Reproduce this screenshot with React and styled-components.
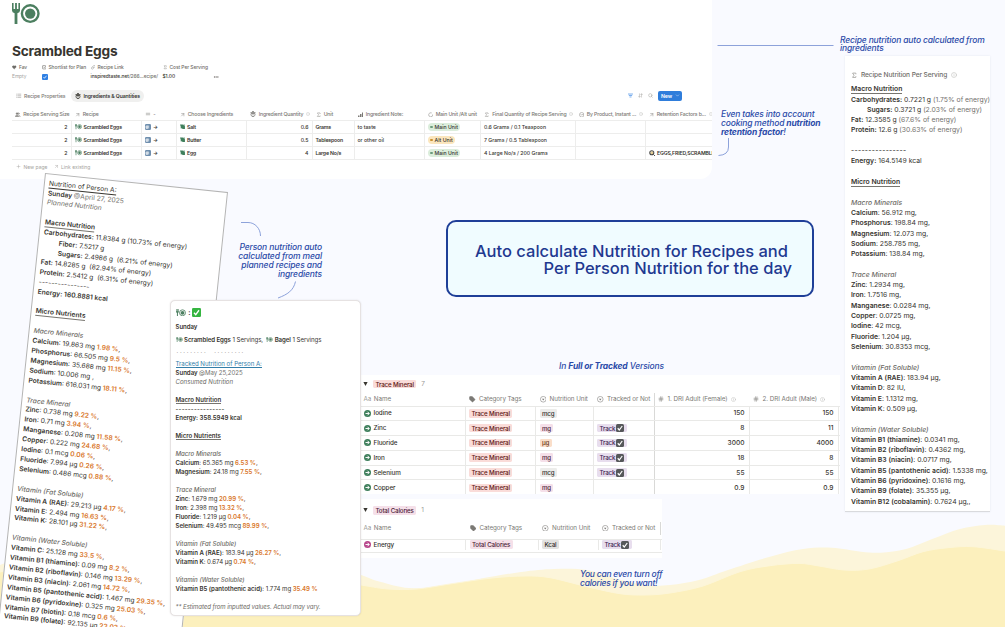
import React from 'react';
import styled, { createGlobalStyle, css } from 'styled-components';
import {
  ArrowUpRight,
  ArrowDownUp,
  CheckSquare,
  ChevronDown,
  CircleChevronDown,
  Ellipsis,
  Heart,
  Info,
  Link,
  List,
  ListFilter,
  LoaderCircle,
  Plus,
  Search,
  Sigma,
  Tag as TagIcon,
  Users,
  Equal,
  Hash,
} from 'lucide-react';

const GlobalStyle = createGlobalStyle`
  * { box-sizing: border-box; }
  body {
    margin: 0;
    background: #f9faff;
    font-family: Inter, "Liberation Sans", sans-serif;
    color: #37352f;
  }
  svg { flex-shrink: 0; }
`;

const Board = styled.main`
  position: relative;
  width: 1005px;
  height: 627px;
  overflow: hidden;
  background: #f9faff;
`;

const Backdrop = styled.svg`
  position: absolute;
  inset: 0;
`;

/* every sheet pinned on the board */
const Sheet = styled.section`
  position: absolute;
  left: ${({ $x }) => $x}px;
  top: ${({ $y }) => $y}px;
  width: ${({ $w }) => $w}px;
  height: ${({ $h }) => $h}px;
  background: #fff;
  overflow: hidden;
`;

const RecipeSheet = styled(Sheet)`
  border-radius: 0 0 12px 0;
  padding: 3px 0 0 12px;
`;

const NutritionSheet = styled(Sheet)`
  padding: 13px 0 0 6px;
  border-bottom: 1.5px solid #d9dadd;
  box-shadow: 0 0 2px rgb(60 70 110 / 10%);
`;

const PlannedSheet = styled(Sheet)`
  transform: rotate(5.95deg);
  transform-origin: 0 0;
  border: 1px solid #b4b4b4;
  padding: 4.6px 0 0 4px;
`;

const TrackedSheet = styled(Sheet)`
  border: 1px solid #e6e2e2;
  border-radius: 5px;
  box-shadow: 0 0 1.5px rgb(80 60 60 / 18%);
  padding: 6px 0 0 5px;
`;

/* ---------- text ---------- */

const Lines = styled.div`
  font-size: ${({ $size }) => $size}px;
  line-height: ${({ $leading }) => $leading}px;
  letter-spacing: ${({ $track }) => $track || 0}px;
  white-space: pre;
`;

const Line = styled.div`
  height: ${({ $height }) => $height}px;
  padding-left: ${({ $indent }) => $indent || 0}px;
`;

const Strong = styled.b`
  font-weight: 600;
`;

const Heading = styled.span`
  font-weight: 600;
  border-bottom: 0.7px solid #77756f;
`;

const Group = styled.i`
  color: #6d6b66;
  font-weight: ${({ $light }) => ($light ? 400 : 500)};
  letter-spacing: ${({ $track }) => $track || 0}px;
`;

const Percent = styled.span`
  color: #d9772b;
  font-weight: 600;
`;

const Muted = styled.span`
  color: #73716d;
`;

const PersonLink = styled.span`
  color: ${({ $blue }) => ($blue ? '#337ea9' : '#37352f')};
  border-bottom: 0.7px solid currentColor;
`;

const Dashes = styled.span`
  font-weight: 500;
  letter-spacing: ${({ $track }) => $track}px;
`;

const Note = styled.p`
  position: absolute;
  left: ${({ $x }) => $x}px;
  top: ${({ $y }) => $y}px;
  width: ${({ $w }) => $w}px;
  margin: 0;
  color: #2b4aa8;
  font-size: 8.5px;
  line-height: 8.9px;
  font-style: italic;
  font-weight: 500;
  letter-spacing: ${({ $track }) => $track || -0.13}px;
  text-align: ${({ $align }) => $align || 'left'};
  white-space: pre;

  b { font-weight: 700; }
`;

const Callout = styled.section`
  position: absolute;
  left: 445.5px;
  top: 219.5px;
  width: 368px;
  height: 77.5px;
  border: 2px solid #1f3f98;
  border-radius: 10px;
  background: #f0fcff;
  display: flex;
  flex-direction: column;
  justify-content: center;
  align-items: flex-end;
  padding: 4px 19.5px 0 0;
  color: #1f3990;
  font-size: 16.5px;
  line-height: 17.5px;
  font-weight: 500;
  white-space: pre;
`;

const CalloutLine = styled.span`
  margin-right: ${({ $inset }) => $inset || 0}px;
`;

/* ---------- recipe page ---------- */

const Title = styled.h1`
  margin: 12px 0 0;
  font-size: 13.7px;
  line-height: 23px;
  font-weight: 700;
  letter-spacing: -0.22px;
  height: 22px;
`;

const Props = styled.div`
  display: grid;
  grid-template-columns: 29.5px 49px 72px 50.5px 30px;
  font-size: 4.9px;
  line-height: 9.3px;
  letter-spacing: -0.06px;
  margin-top: 1px;
  white-space: nowrap;
`;

const PropName = styled.div`
  display: flex;
  align-items: center;
  gap: 2.5px;
  color: #6f6d69;
  font-weight: 500;
`;

const PropValue = styled.div`
  display: flex;
  align-items: center;
  color: ${({ $faint }) => ($faint ? '#a5a4a1' : '#37352f')};
  font-weight: ${({ $faint }) => ($faint ? 400 : 500)};
`;

const BlueCheck = styled.span`
  width: 6px;
  height: 6px;
  border-radius: 1px;
  background: #2f80e4;
  display: grid;
  place-items: center;
`;

const Toolbar = styled.div`
  display: flex;
  align-items: center;
  height: 12px;
  margin: 8.4px 0 6.6px;
  padding-right: 30px;
  font-size: 5.1px;
  letter-spacing: -0.1px;
`;

const ViewTab = styled.span`
  display: flex;
  align-items: center;
  gap: 2.5px;
  height: 11.5px;
  padding: 0 4px;
  margin-right: ${({ $gap }) => $gap || 0}px;
  border-radius: 6px;
  white-space: nowrap;
  color: ${({ $active }) => ($active ? '#37352f' : '#7c7a76')};
  background: ${({ $active }) => ($active ? '#f0f0ef' : 'transparent')};
  font-weight: ${({ $active }) => ($active ? 600 : 500)};
`;

const Tools = styled.div`
  margin-left: auto;
  display: flex;
  align-items: center;
  gap: 5px;
  color: #93918d;
`;

const NewButton = styled.span`
  display: flex;
  align-items: center;
  justify-content: space-between;
  width: 24px;
  height: 10px;
  padding: 0 2px 0 3px;
  border-radius: 2px;
  background: #2f7ddb;
  color: #fff;
  font-size: 5.2px;
  font-weight: 600;
`;

const recipeColumns = '59.5px 70px 35px 70.5px 65.5px 42px 70px 56.5px 94.5px 70px 80px';

const RecipeRow = styled.div`
  display: grid;
  grid-template-columns: ${recipeColumns};
  height: ${({ $head }) => ($head ? 12.5 : 13)}px;
  border-bottom: 1px solid #ededec;
  font-size: 5.2px;
  white-space: nowrap;
`;

const RecipeCell = styled.div`
  display: flex;
  align-items: center;
  gap: ${({ $head }) => ($head ? 2.7 : 2)}px;
  justify-content: ${({ $end }) => ($end ? 'flex-end' : 'flex-start')};
  padding: 0 3px;
  border-right: ${({ $head }) => ($head ? 0 : '1px solid #ededec')};
  color: ${({ $head }) => ($head ? '#7b7975' : '#37352f')};
  font-weight: ${({ $strong }) => ($strong ? 600 : 500)};
  letter-spacing: ${({ $head, $strong }) => ($head ? -0.16 : $strong ? -0.17 : -0.02)}px;

  &:last-child { border-right: 0; }
`;

const pillColors = {
  green: ['#dbeddb', '#6c9b7d'],
  yellow: ['#fbe6bd', '#cb912f'],
};

const Pill = styled.span`
  display: flex;
  align-items: center;
  gap: 2px;
  height: 7.4px;
  padding: 0 2.5px;
  border-radius: 4px;
  background: ${({ $color }) => pillColors[$color][0]};

  &::before {
    content: '';
    width: 2.6px;
    height: 2.6px;
    border-radius: 50%;
    background: ${({ $color }) => pillColors[$color][1]};
  }
`;

const NewRow = styled.div`
  display: flex;
  align-items: center;
  gap: 2.5px;
  height: 13px;
  padding-left: 4px;
  color: #a5a3a0;
  font-size: 5px;
  white-space: nowrap;

  svg:not(:first-child) { margin-left: 3.5px; }
`;

const KeyCap = styled.span`
  width: 6.4px;
  height: 6.4px;
  border-radius: 1.2px;
  background: #6f8fae;
  color: #fff;
  display: grid;
  place-items: center;
`;

/* ---------- nutrient tables ---------- */

const DbRow = styled.div`
  display: grid;
  grid-template-columns: ${({ $cols }) => $cols};
  height: ${({ $h }) => $h}px;
  padding-bottom: ${({ $drop }) => $drop || 0}px;
  border-bottom: ${({ $last }) => ($last ? 0 : '1px solid #e9e9e7')};
  font-size: 6.5px;
  white-space: nowrap;
`;

const DbCell = styled.div`
  display: flex;
  align-items: center;
  gap: ${({ $head }) => ($head ? 3.6 : 3)}px;
  padding: 0 4px 0 3.5px;
  justify-content: ${({ $end }) => ($end ? 'flex-end' : 'flex-start')};
  color: ${({ $head }) => ($head ? '#7b7975' : '#37352f')};
  font-size: ${({ $end }) => ($end ? 6.6 : 6.3)}px;
  font-weight: ${({ $name, $end }) => ($name || $end ? 500 : 400)};
  letter-spacing: ${({ $end }) => ($end ? 0 : -0.08)}px;
  ${({ $head }) =>
    !$head &&
    css`
      border-right: 1px solid #e9e9e7;
    `}
  ${({ $rule }) =>
    $rule &&
    css`
      border-right: 1px solid #d9d9d7;
    `}
`;

const GroupHead = styled.div`
  display: flex;
  align-items: center;
  height: ${({ $h }) => $h}px;
  padding-left: 3px;
  gap: 5px;
  font-size: 6.5px;
  color: #9b9a97;
`;

const tagColors = {
  red: ['#fadcd9', '#5d1715'],
  pink: ['#f5e0e9', '#4c2337'],
  gray: ['#ececea', '#32302c'],
  orange: ['#fadec9', '#6a3a1b'],
  purple: ['#e8deee', '#412454'],
  stone: ['#e3e2e0', '#32302c'],
};

const Tag = styled.span`
  display: inline-flex;
  align-items: center;
  gap: 1.2px;
  height: 8.6px;
  padding: 0 2.4px;
  border-radius: 1.4px;
  font-size: 6.2px;
  font-weight: 500;
  letter-spacing: -0.15px;
  background: ${({ $color }) => tagColors[$color][0]};
  color: ${({ $color }) => tagColors[$color][1]};
`;

/* ---------- drawings ---------- */

const Plate = ({ width = 28, height = 21 }) => (
  <svg width={width} height={height} viewBox="0 0 28 21" fill="#4c7f60">
    <path d="M0 0h1.6v6h1.5V0h1.8v6h1.5V0H8v7.4q0 2.3-2.6 2.8V21H2.6V10.2Q0 9.7 0 7.4z" />
    <circle cx="18.2" cy="10.6" r="8.3" fill="none" stroke="#4c7f60" strokeWidth="2.4" />
    <circle cx="18.2" cy="10.6" r="5.2" />
  </svg>
);

const Leaf = () => (
  <svg width="5.5" height="5.5" viewBox="0 0 10 10">
    <path d="M0 1h5l4 3v5H5L2 7z" fill="#3f7f5c" />
    <path d="M1 7h3M6 2h4" stroke="#3f7f5c" strokeWidth="1.5" />
  </svg>
);

const Bowl = () => (
  <svg width="6" height="6" viewBox="0 0 12 12" fill="none" stroke="currentColor" strokeWidth="1.5">
    <path d="M1 3h10M2 5h8v3l-2 3H4L2 8zM4 1h4M6 3v6" />
  </svg>
);

const Bars = () => (
  <svg width="5.5" height="5.5" viewBox="0 0 11 11" fill="currentColor">
    <path d="M0 7h3v3H0zM4 4h3v6H4zM8 1h3v9H8z" />
  </svg>
);

const Go = ({ color }) => (
  <svg width="7" height="7" viewBox="0 0 14 14">
    <circle cx="7" cy="7" r="7" fill={color} />
    <path d="M3 7h7M7 3.5 10.5 7 7 10.5" fill="none" stroke="#fff" strokeWidth="1.9" />
  </svg>
);

const Select = () => (
  <svg width="6.5" height="6.5" viewBox="0 0 13 13" fill="none" stroke="currentColor">
    <circle cx="6.5" cy="6.5" r="5.7" strokeWidth="1.1" />
    <path d="M4 5.3h5L6.5 8.8z" fill="currentColor" stroke="none" />
  </svg>
);

const DarkCheck = () => (
  <svg width="8" height="8" viewBox="0 0 16 16">
    <rect width="16" height="16" rx="3" fill="#56585a" />
    <path d="m3.5 8.5 3 3.5 6-8" fill="none" stroke="#fff" strokeWidth="2.4" />
  </svg>
);

const GreenCheck = () => (
  <svg width="9" height="9" viewBox="0 0 18 18">
    <rect width="18" height="18" rx="2.5" fill="#35b541" />
    <path d="m4 9.5 3.5 4L14 4.5" fill="none" stroke="#fff" strokeWidth="2.6" />
  </svg>
);

const Pan = () => (
  <svg width="6.5" height="6.5" viewBox="0 0 14 14">
    <circle cx="6" cy="6" r="5.5" fill="#4a4a48" />
    <circle cx="6" cy="6" r="3.2" fill="#efe6c8" />
    <circle cx="6.5" cy="6.5" r="1.5" fill="#d8a53a" />
    <path d="m10 10 3 3" stroke="#4a4a48" strokeWidth="2" />
  </svg>
);

const Triangle = () => (
  <svg width="5" height="4" viewBox="0 0 5 4"><path d="M.4 0h4.2L2.5 4z" fill="#37352f" /></svg>
);

const TypeName = styled.span`
  color: #a09e9a;
  margin-right: -1px;
`;

// passes a soft curve through the given points
function smooth(points) {
  let d = `M${points[0]}`;
  for (let i = 0; i < points.length - 1; i += 1) {
    const a = points[i - 1] || points[i];
    const b = points[i];
    const c = points[i + 1];
    const e = points[i + 2] || c;
    d += `C${b[0] + (c[0] - a[0]) / 6} ${b[1] + (c[1] - a[1]) / 6} ${c[0] - (e[0] - b[0]) / 6} ${c[1] - (e[1] - b[1]) / 6} ${c[0]} ${c[1]}`;
  }
  return d;
}

const backWave = [
  [0, 565], [60, 545], [180, 530], [300, 552], [361, 575], [380, 581.7], [409, 588], [442, 586.7], [479, 579],
  [521, 572], [554, 569], [587, 570], [617, 579], [645, 585], [670, 585], [699, 580], [728, 570], [770, 556.7],
  [803, 549], [832, 547.7], [861, 551.7], [881, 552.7], [906, 549], [935, 538], [960, 529], [985, 525], [1005, 525.7],
];

const frontWave = [
  [0, 572], [60, 560], [180, 560], [300, 575], [361, 585], [388, 589], [417, 589], [450, 584], [492, 578],
  [525, 576], [550, 577.7], [587, 586.7], [620, 593.7], [645, 595], [670, 593], [703, 586], [740, 571.7],
  [770, 565.7], [799, 563.4], [819, 566], [844, 570], [869, 569], [898, 560.7], [923, 551.7], [948, 547.7],
  [973, 546.7], [1005, 551],
];

/* ---------- data ---------- */

const recipeNutrition = [
  { h: 'Macro Nutrition' },
  { b: 'Carbohydrates:', t: '0.7221 g', m: '(1.75% of energy)' },
  { b: 'Sugars:', t: '0.3721 g', m: '(2.03% of energy)', indent: 16 },
  { b: 'Fat:', t: '12.3585 g', m: '(67.6% of energy)' },
  { b: 'Protein:', t: '12.6 g', m: '(30.63% of energy)' },
  {},
  { dash: '----------------', track: 0.3 },
  { b: 'Energy:', t: '164.5149 kcal' },
  {},
  { h: 'Micro Nutrition' },
  {},
  { g: 'Macro Minerals' },
  { b: 'Calcium', t: '56.912 mg,' },
  { b: 'Phosphorus', t: '198.84 mg,' },
  { b: 'Magnesium', t: '12.073 mg,' },
  { b: 'Sodium', t: '258.785 mg,' },
  { b: 'Potassium', t: '138.84 mg,' },
  {},
  { g: 'Trace Mineral' },
  { b: 'Zinc', t: '1.2934 mg,' },
  { b: 'Iron', t: '1.7516 mg,' },
  { b: 'Manganese', t: '0.0284 mg,' },
  { b: 'Copper', t: '0.0725 mg,' },
  { b: 'Iodine', t: '42 mcg,' },
  { b: 'Fluoride', t: '1.204 µg,' },
  { b: 'Selenium', t: '30.8353 mcg,' },
  {},
  { g: 'Vitamin (Fat Soluble)' },
  { b: 'Vitamin A (RAE)', t: '183.94 µg,' },
  { b: 'Vitamin D', t: '82 IU,' },
  { b: 'Vitamin E', t: '1.1312 mg,' },
  { b: 'Vitamin K', t: '0.509 µg,' },
  {},
  { g: 'Vitamin (Water Soluble)' },
  { b: 'Vitamin B1 (thiamine)', t: '0.0341 mg,' },
  { b: 'Vitamin B2 (riboflavin)', t: '0.4362 mg,' },
  { b: 'Vitamin B3 (niacin)', t: '0.0717 mg,' },
  { b: 'Vitamin B5 (pantothenic acid)', t: '1.5338 mg,' },
  { b: 'Vitamin B6 (pyridoxine)', t: '0.1616 mg,' },
  { b: 'Vitamin B9 (folate)', t: '35.355 µg,' },
  { b: 'Vitamin B12 (cobalamin)', t: '0.7624 µg,,' },
];

const plannedNutrition = [
  { link: 'Nutrition of Person A:' },
  { b: 'Sunday ', m: '@April 27, 2025' },
  { g: 'Planned Nutrition', light: true },
  {},
  { h: 'Macro Nutrition' },
  { b: 'Carbohydrates:', t: '11.8384 g (10.73% of energy)' },
  { b: 'Fiber:', t: '7.5217 g', indent: 16 },
  { b: 'Sugars:', t: '2.4986 g  (6.21% of energy)', indent: 16 },
  { b: 'Fat:', t: '14.8285 g  (82.94% of energy)' },
  { b: 'Protein:', t: '2.5412 g  (6.31% of energy)' },
  { dash: '----------------', track: 0.1 },
  { b: 'Energy: 160.8881 kcal ' },
  {},
  { h: 'Micro Nutrients' },
  {},
  { g: 'Macro Minerals' },
  { b: 'Calcium', t: '19.863 mg', p: '1.98 %' },
  { b: 'Phosphorus', t: '66.505 mg', p: '9.5 %' },
  { b: 'Magnesium', t: '35.688 mg', p: '11.15 %' },
  { b: 'Sodium', t: '10.006 mg ,' },
  { b: 'Potassium', t: '616.031 mg', p: '18.11 %' },
  {},
  { g: 'Trace Mineral' },
  { b: 'Zinc', t: '0.738 mg', p: '9.22 %' },
  { b: 'Iron', t: '0.71 mg', p: '3.94 %' },
  { b: 'Manganese', t: '0.208 mg', p: '11.58 %' },
  { b: 'Copper', t: '0.222 mg', p: '24.68 %' },
  { b: 'Iodine', t: '0.1 mcg', p: '0.06 %' },
  { b: 'Fluoride', t: '7.994 µg', p: '0.26 %' },
  { b: 'Selenium', t: '0.486 mcg', p: '0.88 %' },
  {},
  { g: 'Vitamin (Fat Soluble)' },
  { b: 'Vitamin A (RAE)', t: '29.213 µg', p: '4.17 %' },
  { b: 'Vitamin E', t: '2.494 mg', p: '16.63 %' },
  { b: 'Vitamin K', t: '28.101 µg', p: '31.22 %' },
  {},
  { g: 'Vitamin (Water Soluble)' },
  { b: 'Vitamin C', t: '25.128 mg', p: '33.5 %' },
  { b: 'Vitamin B1 (thiamine)', t: '0.09 mg', p: '8.2 %' },
  { b: 'Vitamin B2 (riboflavin)', t: '0.146 mg', p: '13.29 %' },
  { b: 'Vitamin B3 (niacin)', t: '2.061 mg', p: '14.72 %' },
  { b: 'Vitamin B5 (pantothenic acid)', t: '1.467 mg', p: '29.35 %' },
  { b: 'Vitamin B6 (pyridoxine)', t: '0.325 mg', p: '25.03 %' },
  { b: 'Vitamin B7 (biotin)', t: '0.18 mcg', p: '0.6 %' },
  { b: 'Vitamin B9 (folate)', t: '92.135 µg', p: '23.03 %' },
];

const trackedNutrition = [
  { link: 'Tracked Nutrition of Person A:', blue: true },
  { b: 'Sunday ', m: '@May 25,2025' },
  { g: 'Consumed Nutrition', light: true },
  {},
  { h: 'Macro Nutrition' },
  { dash: '----------------', track: 0.25 },
  { b: 'Energy: 358.5949 kcal ' },
  {},
  { h: 'Micro Nutrients' },
  {},
  { g: 'Macro Minerals' },
  { b: 'Calcium', t: '65.365 mg', p: '6.53 %' },
  { b: 'Magnesium', t: '24.18 mg', p: '7.55 %' },
  {},
  { g: 'Trace Mineral' },
  { b: 'Zinc', t: '1.679 mg', p: '20.99 %' },
  { b: 'Iron', t: '2.398 mg', p: '13.32 %' },
  { b: 'Fluoride', t: '1.219 µg', p: '0.04 %' },
  { b: 'Selenium', t: '49.495 mcg', p: '89.99 %' },
  {},
  { g: 'Vitamin (Fat Soluble)' },
  { b: 'Vitamin A (RAE)', t: '183.94 µg', p: '26.27 %' },
  { b: 'Vitamin K', t: '0.674 µg', p: '0.74 %' },
  {},
  { g: 'Vitamin (Water Soluble)' },
  { b: 'Vitamin B5 (pantothenic acid)', t: '1.774 mg', p: '35.49 %', end: true },
  {},
  { g: '** Estimated from inputted values. Actual may vary.', light: true, track: -0.09 },
];

const ingredients = [
  { name: 'Salt', qty: '0.6', unit: 'Grams', note: 'to taste', kind: 'Main Unit', color: 'green', total: '0.6 Grams / 0.1 Teaspoon' },
  { name: 'Butter', qty: '0.5', unit: 'Tablespoon', note: 'or other oil', kind: 'Alt Unit', color: 'yellow', total: '7 Grams / 0.5 Tablespoon' },
  { name: 'Egg', qty: '4', unit: 'Large No/s', note: '', kind: 'Main Unit', color: 'green', total: '4 Large No/s / 200 Grams', factor: 'EGGS,FRIED,SCRAMBLED' },
];

const minerals = [
  { name: 'Iodine', unit: 'mcg', color: 'gray', female: '150', male: '150' },
  { name: 'Zinc', unit: 'mg', color: 'pink', track: true, female: '8', male: '11' },
  { name: 'Fluoride', unit: 'µg', color: 'orange', track: true, female: '3000', male: '4000' },
  { name: 'Iron', unit: 'mg', color: 'pink', track: true, female: '18', male: '8' },
  { name: 'Selenium', unit: 'mcg', color: 'gray', track: true, female: '55', male: '55' },
  { name: 'Copper', unit: 'mg', color: 'pink', female: '0.9', male: '0.9' },
];

/* ---------- parts ---------- */

function Report({ items, size, leading, track }) {
  return (
    <Lines $size={size} $leading={leading} $track={track}>
      {items.map((item, i) => (
        <Line key={i} $height={leading} $indent={item.indent}>
          {item.h && <Heading>{item.h}</Heading>}
          {item.g && <Group $light={item.light} $track={item.track}>{item.g}</Group>}
          {item.link && <PersonLink $blue={item.blue}>{item.link}</PersonLink>}
          {item.dash && <Dashes $track={item.track}>{item.dash}</Dashes>}
          {item.b && <Strong>{item.b}</Strong>}
          {item.t && (item.b.endsWith(':') ? ` ${item.t}` : `: ${item.t}`)}
          {item.m && <Muted>{item.t ? ` ${item.m}` : item.m}</Muted>}
          {item.p && <Percent>{` ${item.p}`}</Percent>}
          {item.p && !item.end && ','}
        </Line>
      ))}
    </Lines>
  );
}

const Hint = ({ size = 4 }) => <Info size={size} color="#b9b8b5" />;

function RecipePage() {
  return (
    <RecipeSheet $x={0} $y={0} $w={712} $h={179}>
      <Plate />
      <Title>Scrambled Eggs</Title>
      <Props>
        <PropName><Heart size={4.5} fill="currentColor" /> Fav</PropName>
        <PropName><CheckSquare size={4.5} strokeWidth={3} /> Shortlist for Plan</PropName>
        <PropName><Link size={4.5} /> Recipe Link</PropName>
        <PropName><Sigma size={4.5} /> Cost Per Serving</PropName>
        <span />
        <PropValue $faint>Empty</PropValue>
        <PropValue>
          <BlueCheck>
            <svg width="4" height="4" viewBox="0 0 8 8"><path d="m1 4 2 2.5 4-5" fill="none" stroke="#fff" strokeWidth="1.5" /></svg>
          </BlueCheck>
        </PropValue>
        <PropValue>inspiredtaste.net<Muted>/266...ecipe/</Muted></PropValue>
        <PropValue>$1.00</PropValue>
        <PropValue $faint><Ellipsis size={6} strokeWidth={2.5} color="#73716d" /></PropValue>
      </Props>
      <Toolbar>
        <ViewTab $gap={1.5}><List size={5.5} /> Recipe Properties</ViewTab>
        <ViewTab $active><Bowl /> Ingredients &amp; Quantities</ViewTab>
        <Tools>
          <ListFilter size={5} color="#2f80e4" strokeWidth={3} />
          <ArrowDownUp size={5} />
          <Search size={5} />
          <NewButton>New <ChevronDown size={5} /></NewButton>
        </Tools>
      </Toolbar>
      <RecipeRow $head>
        <RecipeCell $head><Users size={5.5} fill="currentColor" /> Recipe Serving Size</RecipeCell>
        <RecipeCell $head><ArrowUpRight size={5.5} /> Recipe</RecipeCell>
        <RecipeCell $head><Equal size={6} /> -</RecipeCell>
        <RecipeCell $head><ArrowUpRight size={5.5} /> Choose Ingredients</RecipeCell>
        <RecipeCell $head><Bowl /> Ingredient Quantity <Hint /></RecipeCell>
        <RecipeCell $head><Sigma size={5.5} /> Unit</RecipeCell>
        <RecipeCell $head><Bars /> Ingredient Note:</RecipeCell>
        <RecipeCell $head><LoaderCircle size={5.5} /> Main Unit /Alt unit</RecipeCell>
        <RecipeCell $head><Sigma size={5.5} /> Final Quantity of Recipe Serving <Hint /></RecipeCell>
        <RecipeCell $head><CircleChevronDown size={5.5} /> By Product, Instant ... <Hint /></RecipeCell>
        <RecipeCell $head><ArrowUpRight size={5.5} /> Retention Factors b... <Hint /></RecipeCell>
      </RecipeRow>
      {ingredients.map((row) => (
        <RecipeRow key={row.name}>
          <RecipeCell $end>2</RecipeCell>
          <RecipeCell $strong><Plate width={7} height={5.3} /> Scrambled Eggs</RecipeCell>
          <RecipeCell $strong><KeyCap><Hash size={4.5} strokeWidth={3} /></KeyCap> →</RecipeCell>
          <RecipeCell $strong><Leaf /> {row.name}</RecipeCell>
          <RecipeCell $end>{row.qty}</RecipeCell>
          <RecipeCell $strong>{row.unit}</RecipeCell>
          <RecipeCell>{row.note}</RecipeCell>
          <RecipeCell><Pill $color={row.color}>{row.kind}</Pill></RecipeCell>
          <RecipeCell>{row.total}</RecipeCell>
          <RecipeCell />
          <RecipeCell $strong>{row.factor && <><Pan /> {row.factor}</>}</RecipeCell>
        </RecipeRow>
      ))}
      <NewRow><Plus size={5} /> New page <ArrowUpRight size={5} /> Link existing</NewRow>
    </RecipeSheet>
  );
}

const TrackTag = () => <Tag $color="purple">Track <DarkCheck /></Tag>;

function TableHead({ cols, h, drop, wide }) {
  return (
    <DbRow $cols={cols} $h={h} $drop={drop}>
      <DbCell $head><TypeName>Aa</TypeName> Name</DbCell>
      <DbCell $head><TagIcon size={6.5} fill="currentColor" /> Category Tags</DbCell>
      <DbCell $head><Select /> Nutrition Unit</DbCell>
      <DbCell $head $rule><Select /> Tracked or Not</DbCell>
      {wide && <DbCell $head><Hash size={6} /> 1. DRI Adult (Female) <Hint size={5} /></DbCell>}
      {wide && <DbCell $head><Hash size={6} /> 2. DRI Adult (Male) <Hint size={5} /></DbCell>}
    </DbRow>
  );
}

const mineralColumns = '105.5px 70.5px 57.5px 61px 95px 89px';
const calorieColumns = '106px 72.5px 60px 62px';

function MineralTable() {
  return (
    <Sheet $x={360} $y={375} $w={480} $h={118.5}>
      <GroupHead $h={18}><Triangle /><Tag $color="red">Trace Mineral</Tag>7</GroupHead>
      <TableHead cols={mineralColumns} h={13.5} wide />
      {minerals.map((row, i) => (
        <DbRow key={row.name} $cols={mineralColumns} $h={14.8} $last={i === minerals.length - 1}>
          <DbCell $name><Go color="#3f7f5c" /> {row.name}</DbCell>
          <DbCell><Tag $color="red">Trace Mineral</Tag></DbCell>
          <DbCell><Tag $color={row.color}>{row.unit}</Tag></DbCell>
          <DbCell $rule>{row.track && <TrackTag />}</DbCell>
          <DbCell $end>{row.female}</DbCell>
          <DbCell $end>{row.male}</DbCell>
        </DbRow>
      ))}
    </Sheet>
  );
}

function CalorieTable() {
  return (
    <Sheet $x={360} $y={499} $w={302} $h={58.5}>
      <GroupHead $h={22.5}><Triangle /><Tag $color="pink">Total Calories</Tag>1</GroupHead>
      <TableHead cols={calorieColumns} h={18} drop={4} />
      <DbRow $cols={calorieColumns} $h={13} $drop={2}>
        <DbCell $name><Go color="#b8478c" /> Energy</DbCell>
        <DbCell><Tag $color="pink">Total Calories</Tag></DbCell>
        <DbCell><Tag $color="stone">Kcal</Tag></DbCell>
        <DbCell><TrackTag /></DbCell>
      </DbRow>
    </Sheet>
  );
}

const PropertyName = styled.div`
  display: flex;
  align-items: center;
  gap: 3.5px;
  height: 12px;
  margin-bottom: 3.2px;
  color: #6f6d69;
  font-size: 6.6px;
  letter-spacing: -0.1px;
  font-weight: 500;
  white-space: nowrap;
`;

const MealStatus = styled.div`
  display: flex;
  align-items: center;
  gap: 2.8px;
  height: 10px;
  font-size: 7px;
  font-weight: 600;

  svg:last-child { margin-left: -1.5px; }
`;

const MealText = styled.div`
  display: flex;
  align-items: center;
  gap: 1.5px;
  height: ${({ $h }) => $h}px;
  font-size: 6.1px;
  letter-spacing: -0.07px;
  white-space: pre;
`;

const Dots = styled.div`
  height: 16.7px;
  padding-left: 1px;
  font-size: 6px;
  line-height: 18px;
  letter-spacing: 1.7px;
  color: #6f6d69;
  white-space: pre;
`;

export default function App() {
  return (
    <Board>
      <GlobalStyle />
      <Backdrop width="1005" height="627">
        <path d={`${smooth(backWave)}V627H0Z`} fill="#fcf5da" />
        <path d={`${smooth(frontWave)}V627H0Z`} fill="#fcf0bd" />
        <path d={smooth(frontWave)} fill="none" stroke="#fdf6d9" />
        <g fill="none" stroke="#8097d6" strokeWidth="0.9">
          <path d="M717.5 45.5H833.5" />
          <path d="M728.5 138v9q0 8-10 8.5" />
          <path d="M241 222.5h7c7 0 12.5 6 12.5 13.5" />
          <path d="M295.5 281.5c-2 9-8 13-17.5 16.5" />
        </g>
      </Backdrop>

      <RecipePage />

      <Note $x={840} $y={35.5} $w={160} $track={-0.17}>{'Recipe nutrition auto calculated from\ningredients'}</Note>
      <Note $x={721} $y={110} $w={110} $track={-0.17}>
        {'Even takes into account\ncooking method '}<b>{'nutrition\nretention factor'}</b>!
      </Note>
      <Note $x={222} $y={243} $w={100} $align="right">{'Person nutrition auto\ncalculated from meal\nplanned recipes and\ningredients'}</Note>
      <Note $x={559} $y={362} $w={120}>In <b>Full or Tracked</b> Versions</Note>
      <Note $x={580} $y={570} $w={100} $track={-0.24}>{'You can even turn off\ncalories if you want!'}</Note>

      <NutritionSheet $x={845} $y={56} $w={144.5} $h={455.5}>
        <PropertyName><Sigma size={6.5} /> Recipe Nutrition Per Serving <Hint size={6} /></PropertyName>
        <Report items={recipeNutrition} size={6.85} leading={10.315} track={-0.02} />
      </NutritionSheet>

      <PlannedSheet $x={45} $y={172.5} $w={184} $h={500}>
        <Report items={plannedNutrition} size={6.7} leading={9.92} />
      </PlannedSheet>

      <Callout>
        <CalloutLine $inset={4}>Auto calculate Nutrition for Recipes and</CalloutLine>
        <CalloutLine>Per Person Nutrition for the day</CalloutLine>
      </Callout>

      <MineralTable />
      <CalorieTable />

      <TrackedSheet $x={169.5} $y={300.3} $w={191} $h={316}>
        <MealStatus><Plate width={10} height={7.5} /> : <GreenCheck /></MealStatus>
        <MealText $h={19}><Strong>Sunday</Strong></MealText>
        <MealText $h={6}>
          <Plate width={7} height={5} /><span><Strong>Scrambled Eggs</Strong> 1 Servings, </span>
          <Plate width={7} height={5} /><span><Strong>Bagel</Strong> 1 Servings</span>
        </MealText>
        <Dots>{'.........  .........'}</Dots>
        <Report items={trackedNutrition} size={6.1} leading={9} track={-0.02} />
      </TrackedSheet>
    </Board>
  );
}
